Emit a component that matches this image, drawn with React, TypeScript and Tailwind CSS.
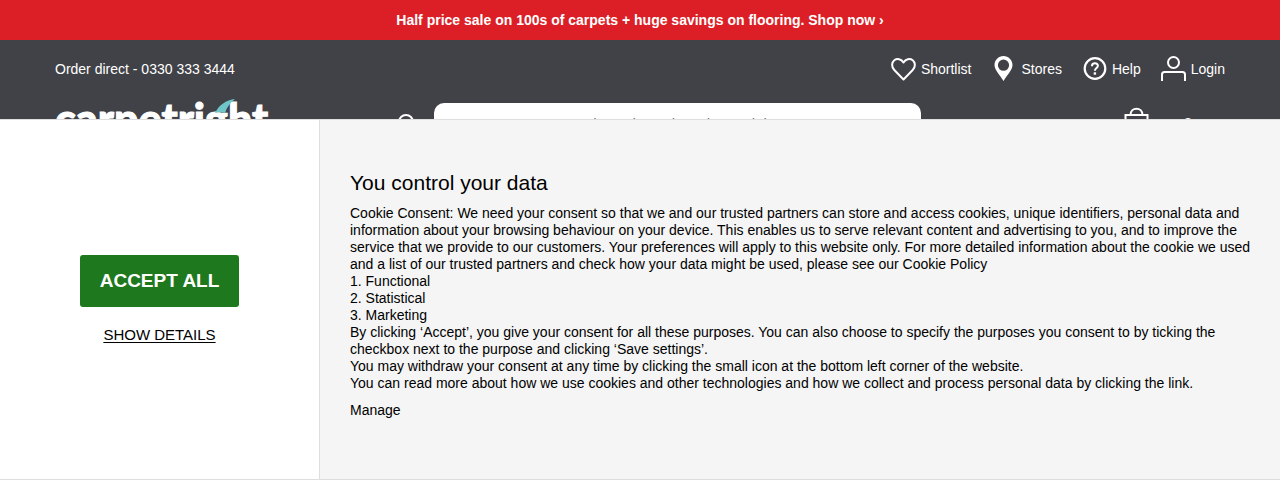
import React from "react";

interface HeaderLinkProps {
  label: string;
  children: React.ReactNode;
}

const iconProps = {
  viewBox: "0 0 25 25",
  className: "size-[25px] shrink-0",
  fill: "none",
  stroke: "currentColor",
  strokeWidth: 2,
  "aria-hidden": true,
};

const HeartIcon = () => (
  <svg {...iconProps}>
    <path
      strokeLinejoin="round"
      d="M12.5 23.5L3.300 14C.300 10.900.500 6.500 3.300 4.300c2.800-2.200 7-1.500 9.200 2.200 2.200-3.700 6.400-4.400 9.200-2.200 2.800 2.200 3 6.600 0 9.700z"
    />
  </svg>
);

const PinIcon = () => (
  <svg {...iconProps}>
    <path
      fill="currentColor"
      stroke="none"
      fillRule="evenodd"
      d="M12.500 0C7.500 0 3.500 4 3.500 9c0 5 5.200 9.500 9 16 3.800-6.500 9-11 9-16 0-5-4-9-9-9zm0 3.600a5.600 5.600 0 1 1 0 11.200 5.600 5.600 0 0 1 0-11.200z"
    />
  </svg>
);

const HelpIcon = () => (
  <svg {...iconProps}>
    <circle cx="13" cy="12.500" r="10.300" strokeWidth="2.200" />
    <path d="M9.900 10.200c0-3.900 6-3.900 6-.4 0 2.300-3 2.200-3 5" />
    <path strokeWidth="2.400" d="M12.900 16.300v2.400" />
  </svg>
);

const UserIcon = () => (
  <svg {...iconProps}>
    <circle cx="12.500" cy="6.500" r="5.500" />
    <path d="M1 25v-6.500c0-1.700 1-2.500 2.500-2.500h18c1.500 0 2.500.8 2.500 2.500V25" />
  </svg>
);

const HeaderLink: React.FC<HeaderLinkProps> = ({ label, children }) => (
  <a href="#" className="flex items-center gap-[5px]">
    {children}
    {label}
  </a>
);

const Logo = () => (
  <a
    href="#"
    aria-label="carpetright"
    className="relative block font-[Lato,sans-serif] text-[43px] leading-[44px] font-black [-webkit-text-stroke:1px_white]"
  >
    carpetright
    <svg viewBox="0 0 20 15" className="absolute top-[2px] left-[160px] h-[15px] w-5 text-[#6fc5c7]" aria-hidden="true">
      <path fill="currentColor" d="M0 14C4 6 11 1 20 0c-5 4-8 8-10 14-3-1-6-1-10 0z" />
    </svg>
  </a>
);

const Header = () => (
  <header className="bg-[#414247] px-[55px] pt-4 pb-8 text-white">
    <div className="flex items-center justify-between">
      <a href="tel:03303333444">Order direct - 0330 333 3444</a>
      <nav className="flex gap-5">
        <HeaderLink label="Shortlist"><HeartIcon /></HeaderLink>
        <HeaderLink label="Stores"><PinIcon /></HeaderLink>
        <HeaderLink label="Help"><HelpIcon /></HeaderLink>
        <HeaderLink label="Login"><UserIcon /></HeaderLink>
      </nav>
    </div>
    <div className="mt-4 grid grid-cols-[21fr_530px_19fr] items-start">
      <Logo />
      <form className="flex items-start gap-[18px]" onSubmit={(e) => e.preventDefault()}>
        <button type="submit" aria-label="Search" className="mt-4">
          <svg {...iconProps}>
            <circle cx="15" cy="9" r="7" />
            <path d="M20 14l5 7" />
          </svg>
        </button>
        <input
          type="search"
          aria-label="Search products"
          placeholder="Search products, brands, models..."
          className="mt-[6px] h-10 min-w-0 grow rounded-[10px] bg-white text-center text-[15px] text-gray-700 placeholder:text-gray-500"
        />
      </form>
      <a href="#" aria-label="Basket" className="mt-[10px] mr-8 flex items-start gap-[34px] justify-self-end">
        <svg {...iconProps}>
          <path d="M1.500 8h22v16h-22zM6.500 8c0-8.500 12-8.500 12 0" />
        </svg>
        <span className="mt-1 text-lg font-bold">0</span>
      </a>
    </div>
  </header>
);

const CookieConsent = () => (
  <div
    role="dialog"
    aria-labelledby="consent-title"
    className="fixed inset-x-0 bottom-0 grid grid-cols-[1fr_3fr] border-y border-[#dedede] bg-[#f5f5f5] text-black"
  >
    <div className="flex flex-col items-center justify-center gap-[18px] border-r border-[#dedede] bg-white">
      <button type="button" className="rounded-[3px] bg-[#1e781e] px-5 py-[14px] text-[19px] leading-6 font-bold text-white">
        ACCEPT ALL
      </button>
      <button type="button" className="text-[15px] leading-5 underline underline-offset-2">
        SHOW DETAILS
      </button>
    </div>
    <div className="pt-[51px] pr-6 pb-[60px] pl-[30px] leading-[17px]">
      <h2 id="consent-title" className="mb-[10px] text-[21px] leading-6">You control your data</h2>
      <p>
        Cookie Consent: We need your consent so that we and our trusted partners can store and access cookies, unique
        identifiers, personal data and information about your browsing behaviour on your device. This enables us to
        serve relevant content and advertising to you, and to improve the service that we provide to our customers.
        Your preferences will apply to this website only. For more detailed information about the cookie we used and a
        list of our trusted partners and check how your data might be used, please see our Cookie Policy
      </p>
      <ol className="list-none">
        <li>1. Functional</li>
        <li>2. Statistical</li>
        <li>3. Marketing</li>
      </ol>
      <p>
        By clicking ‘Accept’, you give your consent for all these purposes. You can also choose to specify the purposes
        you consent to by ticking the checkbox next to the purpose and clicking ‘Save settings’.
      </p>
      <p>You may withdraw your consent at any time by clicking the small icon at the bottom left corner of the website.</p>
      <p>
        You can read more about how we use cookies and other technologies and how we collect and process personal data
        by clicking the link.
      </p>
      <a href="#" className="mt-[10px] inline-block">Manage</a>
    </div>
  </div>
);

export default function App() {
  return (
    <div className="font-[Helvetica,'Liberation_Sans',Arial,sans-serif] text-[14px] leading-5">
      <a href="#" className="block bg-[#dc1f26] py-[10px] text-center font-bold text-white">
        Half price sale on 100s of carpets + huge savings on flooring. Shop now ›
      </a>
      <Header />
      <CookieConsent />
    </div>
  );
}
